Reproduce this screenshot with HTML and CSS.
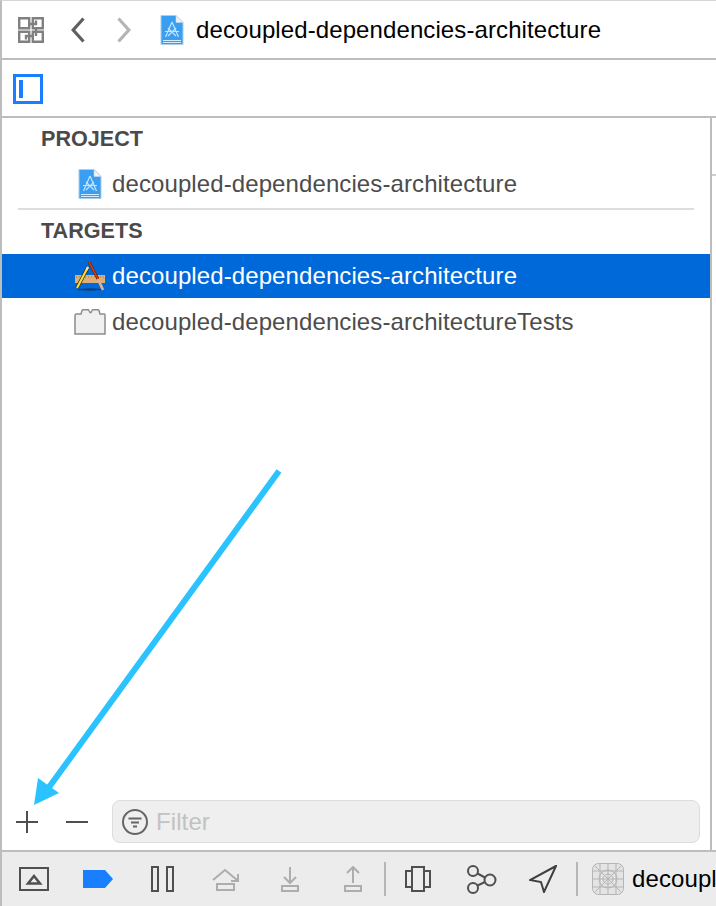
FILE: index.html
```html
<!DOCTYPE html>
<html lang="en">
<head>
  <meta charset="UTF-8" />
  <title>decoupled-dependencies-architecture</title>
  <link rel="stylesheet" href="styles.css">
</head>
<body>
  <svg class="defs" width="0" height="0">
    <symbol id="project-file" viewBox="0 0 24 32">
      <path d="M1 1.500h15l7 7v22H1z" fill="#3a9ff2" stroke="#a9cdea"/>
      <path d="M16 1.500v7h7z" fill="#eef3f8" stroke="#c4d4e2" stroke-width=".6"/>
      <path d="M3 26.500h18M3 28.500h18" stroke="#d6ecfc" stroke-width="1"/>
      <path d="M12 8l-6.500 15M12 8l6.500 15M5 17.500h14M8 22l8-8M16 22l-8-8" stroke="#c4e3fb" stroke-width="1.200" fill="none"/>
    </symbol>
    <symbol id="xcode-app" viewBox="0 0 32 32">
      <ellipse cx="16" cy="29.500" rx="13" ry="1.200" fill="#0b3f7e"/>
      <rect x="1" y="15" width="30" height="8" fill="#dcae78"/>
      <path d="M2 17h28" stroke="#a97b48" stroke-dasharray="1 2"/>
      <path d="M14 7L3 28" stroke="#2a2410" stroke-width="3.600"/>
      <path d="M14 7L3 28" stroke="#f6dc3c" stroke-width="2.200"/>
      <path d="M14 7l-1.500 3" stroke="#e8e2d2" stroke-width="2.200"/>
      <path d="M15 2l9 17" stroke="#7c1f10" stroke-width="2.800"/>
      <path d="M15 2l9 17" stroke="#d2451f" stroke-width="1.300"/>
      <path d="M24 19l5 11" stroke="#e3b08f" stroke-width="2.800"/>
    </symbol>
    <symbol id="test-bundle" viewBox="0 0 32 26">
      <path d="M2.500 5H7l1-3.500q.3-.7 1-.7h5q.7 0 1 .7l1 2h1l1-2q.3-.7 1-.7h5q.7 0 1 .7l1 3.500h4.500Q31 5 31 6.500V25H1V6.500Q1 5 2.500 5z" fill="#f0f0f0" stroke="#8c8c8c" stroke-width="1.500"/>
    </symbol>
  </svg>

  <header class="nav-bar">
    <svg class="grid-icon" width="26" height="26" viewBox="0 0 26 26" fill="none" stroke="#808080" stroke-width="2.400">
      <path d="M1.200 1.200h10v10h-10zM14.800 1.200h10v10h-10zM1.200 14.800h10v10h-10zM14.800 14.800h10v10h-10z"/>
      <path d="M11 7h7V3.500M15 19H8v3.500M18 11v8"/>
    </svg>
    <svg class="chevron" width="14" height="26" viewBox="0 0 14 26" fill="none" stroke="#5f5f5f" stroke-width="3.200"><path d="M12.500 1.500L2.200 13l10.300 11.500"/></svg>
    <svg class="chevron chevron-next" width="14" height="26" viewBox="0 0 14 26" fill="none" stroke="#b4b4b4" stroke-width="3.200"><path d="M1.500 1.500L11.800 13 1.500 24.500"/></svg>
    <svg class="file-icon" width="24" height="32"><use href="#project-file"/></svg>
    <span class="nav-title">decoupled-dependencies-architecture</span>
  </header>

  <div class="tool-bar">
    <span class="sidebar-toggle"><span class="sidebar-toggle-bar"></span></span>
  </div>

  <div class="content">
    <main class="targets">
      <h3 class="section-title">PROJECT</h3>
      <div class="row">
        <svg class="row-icon project-icon" width="24" height="32"><use href="#project-file"/></svg>
        <span>decoupled-dependencies-architecture</span>
      </div>
      <hr class="divider">
      <h3 class="section-title">TARGETS</h3>
      <div class="row selected">
        <svg class="row-icon" width="32" height="32"><use href="#xcode-app"/></svg>
        <span>decoupled-dependencies-architecture</span>
      </div>
      <div class="row row-tests">
        <svg class="row-icon" width="32" height="26"><use href="#test-bundle"/></svg>
        <span>decoupled-dependencies-architectureTests</span>
      </div>

      <div class="filter-bar">
        <svg class="add-icon" width="22" height="22" viewBox="0 0 22 22" stroke="#4f4f4f" stroke-width="2"><path d="M0 11h22M11 0v22"/></svg>
        <svg class="remove-icon" width="22" height="22" viewBox="0 0 22 22" stroke="#4f4f4f" stroke-width="2"><path d="M0 11h22"/></svg>
        <label class="filter-input">
          <svg width="26" height="26" viewBox="0 0 26 26" fill="none" stroke="#666" stroke-width="2"><circle cx="13" cy="13" r="12"/><path d="M6.500 9.500h13M9 13.500h8M11 17.500h4"/></svg>
          <span class="filter-placeholder">Filter</span>
        </label>
      </div>
    </main>
    <aside class="side-strip"><div class="side-strip-tab"></div></aside>
  </div>

  <footer class="debug-bar">
    <svg class="dbg dbg-frame" width="30" height="24" viewBox="0 0 30 24" fill="none" stroke="#4f4f4f" stroke-width="2"><path d="M1 1h28v22H1z"/><path d="M9 16.500h12L15 9z" stroke-width="2.500"/></svg>
    <svg class="dbg dbg-tag" width="30" height="18" viewBox="0 0 30 18"><path d="M0 0h22l8 9-8 9H0z" fill="#1a7fff"/></svg>
    <svg class="dbg dbg-pause" width="23" height="26" viewBox="0 0 23 26" fill="none" stroke="#4f4f4f" stroke-width="2"><path d="M1 1h6v24H1zM16 1h6v24h-6z"/></svg>
    <svg class="dbg dbg-over" width="27" height="23" viewBox="0 0 27 23" fill="none" stroke="#adadad" stroke-width="2"><path d="M1 12L13 2l12 10"/><path d="M26 6v7h-7"/><path d="M5 16h17v6H5z"/></svg>
    <svg class="dbg dbg-into" width="18" height="26" viewBox="0 0 18 26" fill="none" stroke="#adadad" stroke-width="2"><path d="M9 1v16M3 11l6 6 6-6"/><path d="M1 20h16v5H1z"/></svg>
    <svg class="dbg dbg-out" width="18" height="26" viewBox="0 0 18 26" fill="none" stroke="#adadad" stroke-width="2"><path d="M9 17V1M3 7l6-6 6 6"/><path d="M1 20h16v5H1z"/></svg>
    <span class="dbg-sep dbg-sep-first"></span>
    <svg class="dbg dbg-views" width="26" height="26" viewBox="0 0 26 26" fill="none" stroke="#4f4f4f" stroke-width="2"><path d="M7 1h12v24H7zM7 5H1v16h6M19 5h6v16h-6"/></svg>
    <svg class="dbg dbg-graph" width="30" height="30" viewBox="0 0 30 30" fill="none" stroke="#4f4f4f" stroke-width="2"><circle cx="6" cy="7" r="5"/><circle cx="6" cy="24" r="5"/><circle cx="23" cy="16" r="5.500"/><path d="M10.500 9.500L18 13.500M10.500 21.500L18 18"/></svg>
    <svg class="dbg dbg-location" width="28" height="28" viewBox="0 0 28 28" fill="none" stroke="#3f3f3f" stroke-width="2"><path d="M27 1L1 15l11 2 3 10z"/></svg>
    <span class="dbg-sep dbg-sep-last"></span>
    <svg class="dbg dbg-sim" width="32" height="32" viewBox="0 0 32 32" fill="#e4e4e4" stroke="#b5b5b5">
      <rect x=".5" y=".5" width="31" height="31" rx="6"/>
      <path d="M.5 8h31M.5 16h31M.5 24h31M8 .5v31M16 .5v31M24 .5v31M2 2l28 28M30 2L2 30" fill="none"/>
      <circle cx="16" cy="16" r="9" fill="none"/><circle cx="16" cy="16" r="5" fill="none"/>
    </svg>
    <span class="dbg-title">decoupl</span>
  </footer>

  <svg class="callout" width="716" height="906" viewBox="0 0 716 906">
    <path d="M279 471L47 790" stroke="#2bc3ff" stroke-width="6" fill="none"/>
    <path d="M38 778L59 793 34 805z" fill="#2bc3ff"/>
  </svg>
</body>
</html>
```

FILE: styles.css
```css
* {
  box-sizing: border-box;
}

html, body {
  height: 100%;
}

body {
  margin: 0;
  height: 906px;
  overflow: hidden;
  position: relative;
  display: flex;
  flex-direction: column;
  background: #fff;
  border-left: 2px solid #bdbdbd;
  border-top: 1px solid #d6d6d6;
  font-family: "Liberation Sans", Arial, sans-serif;
  font-size: 24px;
  letter-spacing: 0.1px;
}

svg {
  display: block;
  flex-shrink: 0;
}

.defs {
  position: absolute;
}

.nav-bar {
  height: 59px;
  flex-shrink: 0;
  display: flex;
  align-items: center;
  padding-left: 16px;
  border-bottom: 2px solid #bdbdbd;
}

.chevron {
  margin-left: 27px;
}

.chevron-next {
  margin-left: 32px;
}

.file-icon {
  margin-left: 29px;
}

.nav-title {
  margin-left: 12px;
  color: #000;
  white-space: nowrap;
}

.tool-bar {
  height: 58px;
  flex-shrink: 0;
  display: flex;
  align-items: center;
  padding-left: 11px;
  padding-top: 2px;
  border-bottom: 2px solid #bdbdbd;
}

.sidebar-toggle {
  width: 30px;
  height: 30px;
  border: 3px solid #1a7fff;
  padding: 3px;
}

.sidebar-toggle-bar {
  display: block;
  width: 4px;
  height: 100%;
  background: #1a7fff;
}

.content {
  flex: 1;
  min-height: 0;
  display: flex;
}

.targets {
  flex: 1;
  min-width: 0;
  display: flex;
  flex-direction: column;
  border-right: 2px solid #bdbdbd;
}

.side-strip {
  width: 4px;
  flex-shrink: 0;
}

.side-strip-tab {
  height: 58px;
  border-bottom: 2px solid #cfcfcf;
}

.section-title {
  margin: 0;
  height: 44px;
  padding-left: 39px;
  padding-bottom: 3px;
  display: flex;
  align-items: center;
  color: #4a4a4a;
  font-size: 21.6px;
  font-weight: bold;
  letter-spacing: 0;
}

.row {
  height: 44px;
  display: flex;
  align-items: center;
  padding-left: 72px;
  color: #4c4c4c;
  white-space: nowrap;
}

.row span {
  margin-left: 6px;
}

.row-icon {
  width: 32px;
}

.project-icon {
  width: 24px;
  margin-left: 4px;
  margin-right: 4px;
}

.selected {
  background: #0069d9;
  color: #fff;
}

.row-tests {
  margin-top: 2px;
}

.divider {
  margin: 2px 16px 0 16px;
  border: 0;
  height: 2px;
  background: #dddddd;
  flex-shrink: 0;
}

.filter-bar {
  margin-top: auto;
  height: 43px;
  margin-bottom: 7px;
  display: flex;
  align-items: center;
  padding-left: 14px;
  padding-right: 10px;
}

.remove-icon {
  margin-left: 28px;
}

.filter-input {
  flex: 1;
  height: 43px;
  margin-left: 24px;
  display: flex;
  align-items: center;
  gap: 8px;
  padding-left: 9px;
  background: #efefef;
  border: 1px solid #dcdcdc;
  border-radius: 8px;
}

.filter-placeholder {
  color: #c2c2c2;
}

.debug-bar {
  height: 56px;
  flex-shrink: 0;
  display: flex;
  align-items: center;
  padding-left: 17px;
  background: #ececec;
  border-top: 2px solid #bdbdbd;
}

.dbg-tag {
  margin-left: 34px;
}

.dbg-pause {
  margin-left: 38px;
}

.dbg-over {
  margin-left: 38px;
}

.dbg-into {
  margin-left: 42px;
}

.dbg-out {
  margin-left: 45px;
}

.dbg-sep {
  width: 2px;
  height: 34px;
  background: #b5b5b5;
  flex-shrink: 0;
}

.dbg-sep-first {
  margin-left: 22px;
}

.dbg-views {
  margin-left: 19px;
}

.dbg-graph {
  margin-left: 36px;
}

.dbg-location {
  margin-left: 32px;
}

.dbg-sep-last {
  margin-left: 19px;
}

.dbg-sim {
  margin-left: 14px;
}

.dbg-title {
  margin-left: 8px;
  color: #000;
  white-space: nowrap;
}

.callout {
  position: absolute;
  left: -2px;
  top: -1px;
  pointer-events: none;
}
```
